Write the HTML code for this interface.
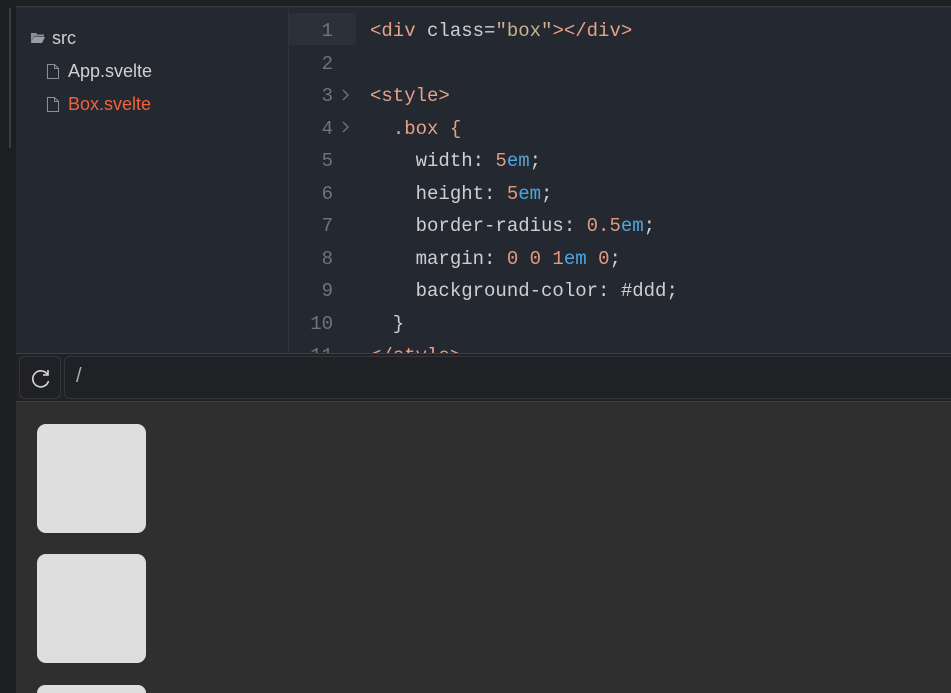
<!DOCTYPE html>
<html style="width:951px;height:693px;overflow:hidden"><head><meta charset="utf-8"><style>
*{margin:0;padding:0;box-sizing:border-box}
body{width:951px;height:693px;overflow:hidden;background:#2f2f2f;position:relative;font-family:"Liberation Sans",sans-serif}
.abs{position:absolute}
#top{left:0;top:0;width:951px;height:7px;background:#1e1f22;border-bottom:1px solid #363a42}
#strip{left:0;top:0;width:16px;height:693px;background:#1d1e21}
#strip:after{content:"";position:absolute;left:9px;top:8px;width:2px;height:140px;background:#3a3d44}
#side{left:16px;top:8px;width:273px;height:345px;background:#242831;border-right:1px solid #30343c}
#ed{left:289px;top:8px;width:662px;height:345px;background:#242831;overflow:hidden}
.f{position:absolute;font-size:17px;color:#d0d0d0;font-family:"Liberation Sans",sans-serif}
.code{font-family:"Liberation Mono",monospace;font-size:19px;position:absolute;white-space:pre;line-height:32.5px}
.ln{left:0;width:44px;text-align:right;color:#70737a;top:7px}
.tx{left:81px;top:7px;color:#cfcfcf}
.t{color:#e4a287}.s{color:#cbb38d}.n{color:#e09b7f}.u{color:#4ea6e0}
#hl{left:0;top:5px;width:67px;height:32px;background:#2c303a}
#tb{left:16px;top:353px;width:935px;height:49px;background:#222226;border-top:1px solid #3a3e47;border-bottom:1px solid #3a3e47}
.box{position:absolute;left:37px;width:109px;height:109px;background:#dedede;border-radius:9px}
</style></head><body>
<div id="top" class="abs"></div>
<div id="strip" class="abs"></div>
<div id="side" class="abs">
<svg class="abs" style="left:14px;top:23px" width="16" height="14" viewBox="0 0 16 14"><path d="M1 2h5l1.5 1.5H14v2H4L1 12z" fill="#8a8e96"/><path d="M4 6h11l-3 6H1z" fill="#9a9ea6"/></svg>
<div class="f" style="left:36px;top:20px;font-size:18px">src</div>
<svg class="abs" style="left:30px;top:55px" width="14" height="17" viewBox="0 0 14 17"><path d="M1.5 1.5h7l4 4v10h-11z M8.5 1.5v4h4" fill="none" stroke="#8a8e96" stroke-width="1"/></svg>
<div class="f" style="left:52px;top:53px;font-size:18px">App.svelte</div>
<svg class="abs" style="left:30px;top:88px" width="14" height="17" viewBox="0 0 14 17"><path d="M1.5 1.5h7l4 4v10h-11z M8.5 1.5v4h4" fill="none" stroke="#8a8e96" stroke-width="1"/></svg>
<div class="f" style="left:52px;top:86px;color:#f2623d;font-size:18px">Box.svelte</div>
</div>
<div id="ed" class="abs">
<div id="hl" class="abs"></div>
<div class="code ln">1
2
3
4
5
6
7
8
9
10
11</div>
<svg class="abs" style="left:52px;top:80px" width="10" height="14"><path d="M2 2l5 5-5 5" fill="none" stroke="#70737a" stroke-width="1.3"/></svg>
<svg class="abs" style="left:52px;top:112px" width="10" height="14"><path d="M2 2l5 5-5 5" fill="none" stroke="#70737a" stroke-width="1.3"/></svg>
<div class="code tx"><span class="t">&lt;div</span> class=<span class="s">"box"</span><span class="t">&gt;&lt;/div&gt;</span>

<span class="t">&lt;style&gt;</span>
  <span class="t">.box {</span>
    width: <span class="n">5</span><span class="u">em</span>;
    height: <span class="n">5</span><span class="u">em</span>;
    border-radius: <span class="n">0.5</span><span class="u">em</span>;
    margin: <span class="n">0 0 1</span><span class="u">em</span> <span class="n">0</span>;
    background-color: #ddd;
  }
<span class="t">&lt;/style&gt;</span></div>
</div>
<div id="tb" class="abs">
<div class="abs" style="left:3px;top:2px;width:42px;height:43px;border:1px solid #33363d;border-radius:6px;background:#202125"></div>
<svg class="abs" style="left:14px;top:13px" width="22" height="22" viewBox="0 0 22 22"><path d="M17.5 7.5A8 8 0 1 0 18.5 14" fill="none" stroke="#d8d8d8" stroke-width="1.6"/><path d="M18 3v5h-5" fill="none" stroke="#d8d8d8" stroke-width="1.6"/></svg>
<div class="abs" style="left:48px;top:2px;width:900px;height:43px;border:1px solid #33363d;border-radius:6px;background:#202125"></div>
<div class="f" style="left:60px;top:11px;font-size:20px;color:#aab">/</div>
</div>
<div class="box" style="top:424px"></div>
<div class="box" style="top:554px"></div>
<div class="box" style="top:685px;height:8px;border-radius:9px 9px 0 0"></div>
</body></html>
